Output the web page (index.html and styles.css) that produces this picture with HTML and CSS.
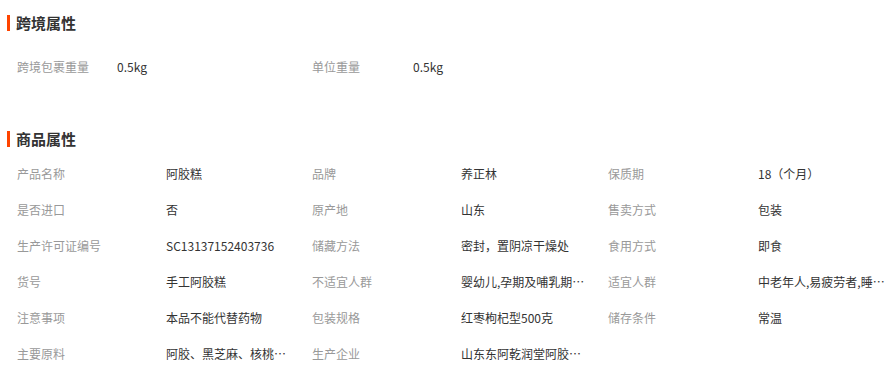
FILE: index.html
```html
<!DOCTYPE html>
<html lang="zh-CN">
<head>
<meta charset="utf-8">
<link rel="stylesheet" href="styles.css">
</head>
<body>
<div class="page">
  <section class="block">
    <h2 class="title">跨境属性</h2>
    <div class="grid grid-short">
      <div class="label">跨境包裹重量</div><div class="value">0.5kg</div>
      <div class="label">单位重量</div><div class="value">0.5kg</div>
    </div>
  </section>
  <section class="block block-second">
    <h2 class="title">商品属性</h2>
    <div class="grid grid-long">
      <div class="label">产品名称</div><div class="value">阿胶糕</div>
      <div class="label">品牌</div><div class="value">养正林</div>
      <div class="label">保质期</div><div class="value">18（个月）</div>

      <div class="label">是否进口</div><div class="value">否</div>
      <div class="label">原产地</div><div class="value">山东</div>
      <div class="label">售卖方式</div><div class="value">包装</div>

      <div class="label">生产许可证编号</div><div class="value">SC13137152403736</div>
      <div class="label">储藏方法</div><div class="value">密封，置阴凉干燥处</div>
      <div class="label">食用方式</div><div class="value">即食</div>

      <div class="label">货号</div><div class="value">手工阿胶糕</div>
      <div class="label">不适宜人群</div><div class="value">婴幼儿,孕期及哺乳期妇女</div>
      <div class="label">适宜人群</div><div class="value">中老年人,易疲劳者,睡眠不佳者</div>

      <div class="label">注意事项</div><div class="value">本品不能代替药物</div>
      <div class="label">包装规格</div><div class="value">红枣枸杞型500克</div>
      <div class="label">储存条件</div><div class="value">常温</div>

      <div class="label">主要原料</div><div class="value">阿胶、黑芝麻、核桃仁、红枣</div>
      <div class="label">生产企业</div><div class="value">山东东阿乾润堂阿胶有限公司</div>
    </div>
  </section>
</div>
</body>
</html>
```

FILE: styles.css
```css
html, body {
  margin: 0;
  padding: 0;
  background: #fff;
}
body {
  font-family: "Noto Sans CJK SC", "Liberation Sans", sans-serif;
  font-size: 12px;
  color: #333;
}
.page {
  padding: 15px 0 0 7px;
}
.title {
  margin: 0;
  height: 16px;
  line-height: 16px;
  font-size: 15px;
  font-weight: bold;
  color: #333;
  border-left: 3px solid #ff4400;
  padding-left: 6px;
}
.grid {
  display: grid;
  padding-left: 10px;
  margin-top: 18px;
}
.grid-short {
  grid-template-columns: 100px 195px 101px auto;
}
.block-second {
  margin-top: 46px;
}
.block-second .grid {
  margin-top: 9px;
}
.grid-long {
  grid-template-columns: 149px 146px 149px 147px 150px auto;
}
.label, .value {
  height: 36px;
  line-height: 36px;
  white-space: nowrap;
}
.label {
  color: #999;
}
.value {
  color: #333;
  max-width: 130px;
  overflow: hidden;
  text-overflow: ellipsis;
}
```
